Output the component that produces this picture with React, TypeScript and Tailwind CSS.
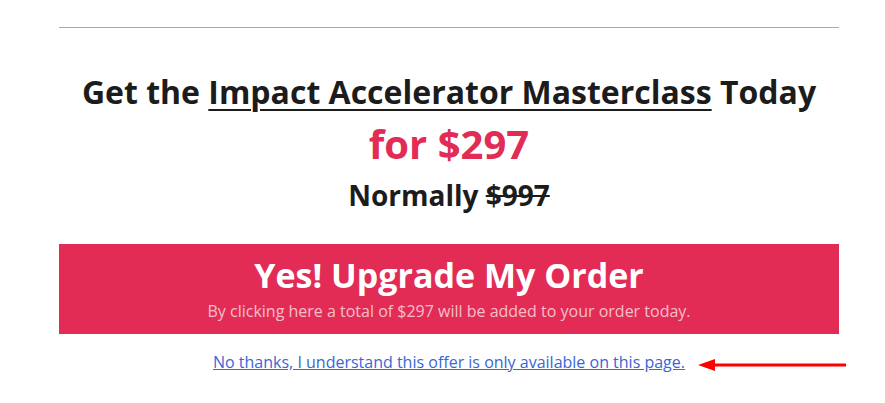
export default function App() {
  return (
    <div
      className="min-h-[403px] w-[885px] bg-white"
      style={{ fontFamily: '"Open Sans", "Liberation Sans", sans-serif' }}
    >
      <div className="ml-[59px] w-[780px] pt-[27px]">
        <hr className="border-0 border-t border-[#aaaaaa]" />
        <h1 className="mt-[44px] text-center text-[32px] font-bold leading-[40px] text-[#1c1c1c]">
          Get the <span className="underline decoration-[2px] underline-offset-[5px]">Impact Accelerator Masterclass</span> Today
        </h1>
        <p className="mt-[8px] text-center text-[40px] font-bold leading-[48px] text-[#e22c55]">for $297</p>
        <p className="mt-[9px] text-center text-[28px] font-bold leading-[36px] text-[#1c1c1c]">
          Normally <span className="line-through">$997</span>
        </p>
        <button
          type="button"
          className="mt-[31px] flex h-[90px] w-full flex-col items-center justify-center bg-[#e22c55] text-white"
        >
          <span className="text-[34px] font-bold leading-[40px]">Yes! Upgrade My Order</span>
          <span className="mt-[4px] text-[16px] leading-[24px] text-white/70">
            By clicking here a total of $297 will be added to your order today.
          </span>
        </button>
        <div className="relative mt-[17px] flex justify-center">
          <a href="#" className="text-[16px] leading-[22px] text-[#3a66d6] underline">
            No thanks, I understand this offer is only available on this page.
          </a>
          <svg
            className="absolute left-[639px] top-[7px]"
            width="150"
            height="14"
            viewBox="0 0 150 14"
          >
            <line x1="14" y1="7" x2="148" y2="7" stroke="#ff0000" strokeWidth="3" />
            <polygon points="0,7 17,1 17,13" fill="#ff0000" />
          </svg>
        </div>
      </div>
    </div>
  );
}
